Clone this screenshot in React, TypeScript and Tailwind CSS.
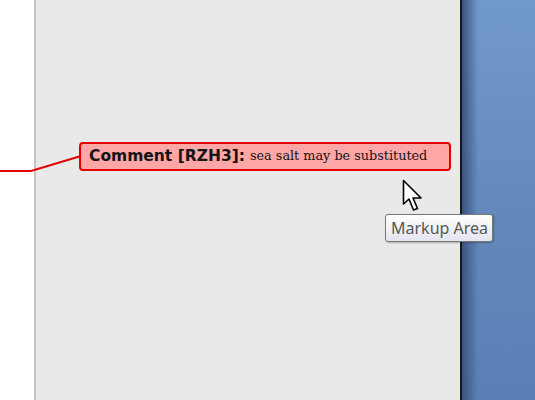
export default function App() {
  return (
    <div className="relative flex h-[400px] w-[535px] overflow-hidden">
      <div className="w-[34px] shrink-0 bg-white" />
      <div className="w-[422px] shrink-0 border-l-2 border-[#c4c4c4] bg-[#e9e9e9] pl-[43px] pt-[142px]">
        <div className="flex h-[29px] w-[372px] items-center gap-[5px] rounded-[4px] border-2 border-[#e40000] bg-[#ffa6a6] pl-[8px] text-[#141414]">
          <span className="font-['DejaVu_Sans',sans-serif] text-[15.5px] font-bold leading-none">Comment [RZH3]:</span>
          <span className="font-['DejaVu_Serif',serif] text-[12.8px] leading-none">sea salt may be substituted</span>
        </div>
      </div>
      <div className="w-[4px] shrink-0 bg-[#e9e9e9]" />
      <div className="w-[2px] shrink-0 bg-[#141820]" />
      <div className="relative flex-1 bg-gradient-to-b from-[#7199c9] via-[#6589bc] to-[#5a7fb4]">
        <div className="h-full w-[16px] bg-gradient-to-r from-[#3a5480] to-transparent" />
      </div>

      <svg className="pointer-events-none absolute left-0 top-0" width="90" height="200">
        <polyline points="0,171 31,171 81,156" fill="none" stroke="#e40000" strokeWidth="2" />
      </svg>

      <svg className="pointer-events-none absolute left-[402px] top-[179px]" width="22" height="34" viewBox="0 0 22 34">
        <path d="M1.5 1.5 L1.5 25 L7 20 L11.5 31 L15.5 29.5 L11 19 L19 19 Z" fill="#ffffff" stroke="#000000" strokeWidth="1.6" strokeLinejoin="round" />
      </svg>

      <div className="absolute left-[385px] top-[214px] flex h-[28px] w-[108px] items-center rounded-[3px] border border-[#767676] bg-gradient-to-b from-[#ffffff] to-[#e3e4ee] pl-[5px] font-['Noto_Sans',sans-serif] text-[16px] leading-none text-[#575757] shadow-[1px_1px_2px_rgba(0,0,0,0.25)]">
        Markup Area
      </div>
    </div>
  );
}
